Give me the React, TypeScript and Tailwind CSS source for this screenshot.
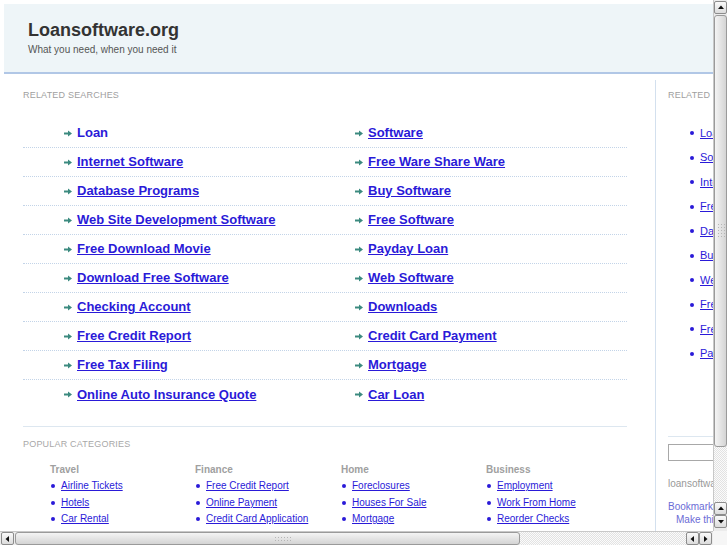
import React from "react";

const related: [string, string][] = [
  ["Loan", "Software"],
  ["Internet Software", "Free Ware Share Ware"],
  ["Database Programs", "Buy Software"],
  ["Web Site Development Software", "Free Software"],
  ["Free Download Movie", "Payday Loan"],
  ["Download Free Software", "Web Software"],
  ["Checking Account", "Downloads"],
  ["Free Credit Report", "Credit Card Payment"],
  ["Free Tax Filing", "Mortgage"],
  ["Online Auto Insurance Quote", "Car Loan"],
];

const sidebar = [
  "Loan",
  "Software",
  "Internet Software",
  "Free Ware Share Ware",
  "Database Programs",
  "Buy Software",
  "Web Site Development Software",
  "Free Software",
  "Free Download Movie",
  "Payday Loan",
];

const categories = [
  { title: "Travel", items: ["Airline Tickets", "Hotels", "Car Rental"] },
  { title: "Finance", items: ["Free Credit Report", "Online Payment", "Credit Card Application"] },
  { title: "Home", items: ["Foreclosures", "Houses For Sale", "Mortgage"] },
  { title: "Business", items: ["Employment", "Work From Home", "Reorder Checks"] },
];

const Arrow = () => (
  <svg width="8" height="7" viewBox="0 0 8 7" className="shrink-0">
    <path d="M0 2.5h4V0.5l4 3-4 3V4.5H0z" fill="#3b8a7f" />
  </svg>
);

const Dot = () => <span className="w-[4px] h-[4px] rounded-full bg-[#2a1ad8] shrink-0" />;

const SearchLink = ({ label, plain }: { label: string; plain?: boolean }) => (
  <a
    href="#"
    className={
      "text-[13px] font-bold text-[#2a1ad8] leading-[16px] " +
      (plain ? "no-underline" : "underline")
    }
  >
    {label}
  </a>
);

const ScrollButton = ({ dir }: { dir: "up" | "down" | "left" | "right" }) => {
  const paths = {
    up: "M1 5L4 1.5 7 5z",
    down: "M1 2l3 3.5L7 2z",
    left: "M5 1L1.5 4 5 7z",
    right: "M2 1l3.5 3L2 7z",
  };
  return (
    <div className="w-[13px] h-[13px] rounded-[2px] border border-[#8c8c8c] bg-linear-to-b from-[#fafafa] to-[#dcdcdc] flex items-center justify-center shrink-0">
      <svg width="8" height="8" viewBox="0 0 8 8">
        <path d={paths[dir]} fill="#111" />
      </svg>
    </div>
  );
};

const Grip = ({ vertical }: { vertical?: boolean }) => (
  <div
    className={
      (vertical ? "w-[8px] h-[16px]" : "w-[18px] h-[6px]") +
      " bg-[image:radial-gradient(#b5b5b5_40%,transparent_45%)] bg-[length:3px_3px]"
    }
  />
);

export default function App() {
  return (
    <div className="w-[727px] h-[545px] overflow-hidden bg-white flex flex-col font-['Liberation_Sans',Arial,sans-serif]">
      <div className="flex h-[531px]">
        <div className="w-[713px] h-[531px] overflow-hidden">
          <div className="w-[820px] pt-[4px] pl-[4px]">
            <div className="h-[70px] bg-[#eef5f8] border-b-2 border-[#b1c7e6] pt-[15px] pl-[24px]">
              <div className="text-[18px] font-bold leading-[22px] text-[#333]">Loansoftware.org</div>
              <div className="text-[10px] leading-[12px] text-[#555] mt-[3px]">What you need, when you need it</div>
            </div>

            <div className="flex mt-[6px]">
              <div className="w-[651px] pl-[19px] pt-[10px] shrink-0">
                <div className="text-[9px] leading-[11px] text-[#a0a0a0] tracking-[0.2px]">RELATED SEARCHES</div>
                <div className="w-[604px] mt-[18px]">
                  {related.map(([a, b], i) => (
                    <div
                      key={a}
                      className={
                        "flex items-center h-[29px] " +
                        (i < related.length - 1 ? "border-b border-dotted border-[#c3d4e8]" : "")
                      }
                    >
                      <div className="w-[302px] pl-[41px] flex items-center gap-[5px]">
                        <Arrow />
                        <SearchLink label={a} plain={i === 0} />
                      </div>
                      <div className="w-[302px] pl-[30px] flex items-center gap-[5px]">
                        <Arrow />
                        <SearchLink label={b} />
                      </div>
                    </div>
                  ))}
                </div>
                <div className="w-[604px] mt-[17px] border-t border-[#dde7f0] pt-[12px]">
                  <div className="text-[9px] leading-[11px] text-[#a8a8a8] tracking-[0.2px]">POPULAR CATEGORIES</div>
                  <div className="grid grid-cols-[145px_146px_145px_146px] pl-[27px] mt-[14px]">
                    {categories.map((c) => (
                      <div key={c.title}>
                        <div className="text-[10px] font-bold leading-[12px] text-[#a0a0a0]">{c.title}</div>
                        <ul className="mt-[2px]">
                          {c.items.map((it) => (
                            <li key={it} className="flex items-center gap-[6px] pl-[1px] h-[16.5px]">
                              <Dot />
                              <a href="#" className="text-[10px] leading-[12px] text-[#2a1ad8] underline">
                                {it}
                              </a>
                            </li>
                          ))}
                        </ul>
                      </div>
                    ))}
                  </div>
                </div>
              </div>

              <div className="w-[160px] border-l border-[#d3e0ee] pl-[12px] pt-[10px] min-h-[480px]">
                <div className="text-[9px] leading-[11px] text-[#a0a0a0] tracking-[0.2px]">RELATED SEARCHES</div>
                <ul className="mt-[20px]">
                  {sidebar.map((s) => (
                    <li key={s} className="flex items-center gap-[6px] pl-[22px] h-[24.5px] whitespace-nowrap">
                      <Dot />
                      <a href="#" className="text-[11px] leading-[13px] text-[#2a1ad8] underline">
                        {s}
                      </a>
                    </li>
                  ))}
                </ul>
                <div className="mt-[70px] border-t border-[#dde7f0] pt-[7px]">
                  <input className="w-[140px] h-[17px] border border-[#a8a8a8] bg-white block" />
                  <div className="mt-[17px] text-[10px] leading-[12px] text-[#999] whitespace-nowrap">loansoftware.org</div>
                  <div className="mt-[10px] text-[10px] leading-[13px] text-[#6b6bd6] whitespace-nowrap">Bookmark this page</div>
                  <div className="pl-[8px] text-[10px] leading-[13px] text-[#6b6bd6] whitespace-nowrap">Make this your homepage</div>
                </div>
              </div>
            </div>
          </div>
        </div>

        <div className="w-[14px] h-[531px] flex flex-col items-center bg-[#ececec] border-l border-[#c8c8c8] pt-[1px]">
          <ScrollButton dir="up" />
          <div className="w-[13px] h-[432px] mt-[1px] rounded-[3px] border border-[#9a9a9a] bg-linear-to-r from-[#f4f4f4] to-[#d4d4d4] flex items-center justify-center">
            <Grip vertical />
          </div>
          <div className="w-[13px] flex-1 bg-[image:repeating-conic-gradient(#e2e2e2_0%_25%,#fbfbfb_0%_50%)] bg-[length:2px_2px]" />
          <ScrollButton dir="up" />
          <ScrollButton dir="down" />
          <div className="h-[3px]" />
        </div>
      </div>

      <div className="flex h-[14px]">
        <div className="w-[713px] flex items-center bg-[#ececec] border-t border-[#c8c8c8] pl-[1px]">
          <ScrollButton dir="left" />
          <div className="h-[13px] w-[505px] ml-[1px] rounded-[3px] border border-[#9a9a9a] bg-linear-to-b from-[#f4f4f4] to-[#d4d4d4] flex items-center justify-center pl-[30px]">
            <Grip />
          </div>
          <div className="h-[13px] flex-1 bg-[image:repeating-conic-gradient(#e2e2e2_0%_25%,#fbfbfb_0%_50%)] bg-[length:2px_2px]" />
          <ScrollButton dir="left" />
          <ScrollButton dir="right" />
          <div className="w-[1px]" />
        </div>
        <div className="flex-1 bg-[#f6f6f6]" />
      </div>
    </div>
  );
}
